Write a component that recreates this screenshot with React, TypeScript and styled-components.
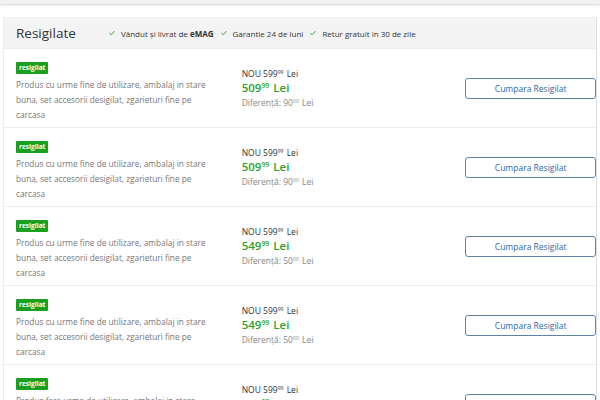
import styled, { createGlobalStyle } from 'styled-components'

const GlobalStyle = createGlobalStyle`
  body {
    margin: 0;
    background: #fff;
    font-family: 'Open Sans', 'DejaVu Sans', sans-serif;
  }
`

type Offer = {
  desc: string
  price: string
  diff: string
}

const offers: Offer[] = [
  { desc: 'Produs cu urme fine de utilizare, ambalaj in stare buna, set accesorii desigilat, zgarieturi fine pe carcasa', price: '509', diff: '90' },
  { desc: 'Produs cu urme fine de utilizare, ambalaj in stare buna, set accesorii desigilat, zgarieturi fine pe carcasa', price: '509', diff: '90' },
  { desc: 'Produs cu urme fine de utilizare, ambalaj in stare buna, set accesorii desigilat, zgarieturi fine pe carcasa', price: '549', diff: '50' },
  { desc: 'Produs cu urme fine de utilizare, ambalaj in stare buna, set accesorii desigilat, zgarieturi fine pe carcasa', price: '549', diff: '50' },
  { desc: 'Produs fara urme de utilizare, ambalaj in stare buna, set accesorii sigilat', price: '569', diff: '30' },
]

const perks = ['Garantie 24 de luni', 'Retur gratuit in 30 de zile']

const Check = () => (
  <CheckSvg viewBox="0 0 10 8">
    <path d="M1.5 4.2 L3.8 6.3 L8.5 1.5" fill="none" stroke="#3aa33a" strokeWidth="1.3" />
  </CheckSvg>
)

const App = () => {
  return (
    <>
      <GlobalStyle />
      <TopShadow />
      <Panel>
        <Header>
          <Title>Resigilate</Title>
          <Perks>
            <Perk>
              <Check />
              Vândut și livrat de&nbsp;<b>eMAG</b>
            </Perk>
            {perks.map((p) => (
              <Perk key={p}>
                <Check />
                {p}
              </Perk>
            ))}
          </Perks>
        </Header>
        {offers.map((o, i) => (
          <Row key={i}>
            <Info>
              <Badge>resigilat</Badge>
              <Desc>{o.desc}</Desc>
            </Info>
            <Prices>
              <Old>
                NOU 599<sup>99</sup> Lei
              </Old>
              <Price>
                {o.price}
                <sup>99</sup> Lei
              </Price>
              <Diff>
                Diferență: {o.diff}
                <sup>00</sup> Lei
              </Diff>
            </Prices>
            <BuyButton>Cumpara Resigilat</BuyButton>
          </Row>
        ))}
      </Panel>
    </>
  )
}

export default App

const TopShadow = styled.div`
  height: 4px;
  background: #f1f1f1;
  box-shadow: 0 1px 3px rgba(0, 0, 0, 0.18);
  margin-bottom: 13px;
`

const Panel = styled.div`
  margin: 0 3px;
  border: 1px solid #ececec;
  border-right-color: #e0e0e0;
  background: #fff;
`

const Header = styled.div`
  display: flex;
  align-items: center;
  height: 30px;
  background: #f4f4f4;
  padding-left: 12px;
`

const Title = styled.h2`
  margin: 0;
  font-size: 13.5px;
  font-weight: 400;
  color: #333;
  width: 92px;
  margin-top: -1px;
`

const Perks = styled.div`
  display: flex;
  align-items: center;
  gap: 6px;
`

const Perk = styled.span`
  display: flex;
  align-items: center;
  font-size: 8px;
  color: #333;
  white-space: nowrap;

  b {
    font-weight: 700;
  }
`

const CheckSvg = styled.svg`
  width: 8px;
  height: 6px;
  margin-right: 5px;
`

const Row = styled.div`
  display: flex;
  align-items: center;
  height: 78px;
  border-top: 1px solid #ececec;
  padding-left: 12px;
`

const Info = styled.div`
  width: 200px;
  align-self: flex-start;
  padding-top: 13px;
`

const Badge = styled.div`
  width: fit-content;
  background: #19a021;
  color: #fff;
  font-size: 6.5px;
  font-weight: 700;
  line-height: 12px;
  padding: 0 3px;
  border-radius: 1px;
`

const Desc = styled.p`
  margin: 3px 0 0;
  font-size: 8.3px;
  line-height: 15px;
  color: #777;
`

const Prices = styled.div`
  margin-left: 26px;
  width: 224px;

  sup {
    font-size: 0.6em;
    vertical-align: 0.45em;
    line-height: 0;
    margin-right: 1px;
  }
`

const Old = styled.div`
  font-size: 8.5px;
  line-height: 13px;
  color: #333;
`

const Price = styled.div`
  font-size: 11.5px;
  line-height: 15px;
  font-weight: 600;
  color: #2aa32a;
`

const Diff = styled.div`
  font-size: 8.5px;
  line-height: 15px;
  color: #888;
`

const BuyButton = styled.button`
  width: 131px;
  height: 21px;
  border: 1px solid #5d84a8;
  border-radius: 3px;
  background: #fff;
  color: #2c69a3;
  font-family: 'Open Sans', 'DejaVu Sans', sans-serif;
  font-size: 8.5px;
  padding: 0;
  cursor: pointer;
`
